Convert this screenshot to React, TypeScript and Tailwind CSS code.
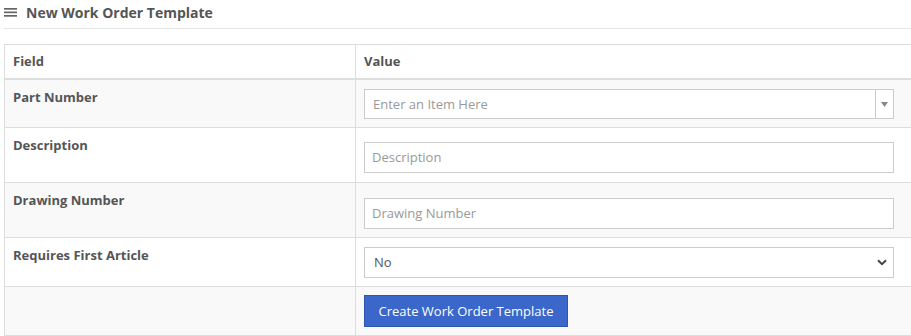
import React from 'react'

const rowCell = 'pl-[8px] pt-[8px] font-bold'

function Row({
  label,
  bg,
  h,
  pt,
  children,
}: {
  label: string
  bg: string
  h: string
  pt: string
  children: React.ReactNode
}) {
  return (
    <div className={`flex border-b border-[#dddddd] ${bg} ${h}`}>
      <div className={`w-[351px] shrink-0 border-r border-[#dddddd] leading-[18px] ${rowCell}`}>{label}</div>
      <div className={`pl-[8px] ${pt}`}>{children}</div>
    </div>
  )
}

export default function App() {
  return (
    <div className="bg-white pl-[4px] text-[13px] text-[#555555] overflow-hidden" style={{ fontFamily: '"Open Sans", "Liberation Sans", sans-serif' }}>
      {/* Header */}
      <div className="h-[29px] border-b border-[#e5e5e5] flex items-start pt-[3px] gap-[9px]">
        <svg width="13" height="10" viewBox="0 0 13 10" className="mt-[5px] shrink-0">
          <rect x="0" y="0" width="13" height="1.7" fill="#666" />
          <rect x="0" y="3.5" width="13" height="1.7" fill="#666" />
          <rect x="0" y="7" width="13" height="1.7" fill="#666" />
        </svg>
        <h1 className="font-bold leading-[20px] text-[14px]">New Work Order Template</h1>
      </div>

      {/* Table */}
      <div className="mt-[15px] w-[908px] border-t border-l border-r border-[#dddddd]">
        <div className="flex h-[35px] border-b-2 border-[#dddddd] bg-white font-bold">
          <div className="w-[351px] shrink-0 border-r border-[#dddddd] pl-[8px] pt-[1px] flex items-center">Field</div>
          <div className="pl-[8px] pt-[1px] flex items-center">Value</div>
        </div>

        <Row label="Part Number" bg="bg-[#f9f9f9]" h="h-[48px]" pt="pt-[9px]">
          <div className="flex w-[530px] h-[30px] border border-[#cccccc] bg-white">
            <div className="flex-1 pl-[8px] pt-[2px] flex items-center text-[#999999]">Enter an Item Here</div>
            <div className="w-[18px] border-l border-[#cccccc] flex items-center justify-center">
              <svg width="7" height="5" viewBox="0 0 7 5">
                <path d="M0 0 H7 L3.5 5 Z" fill="#888" />
              </svg>
            </div>
          </div>
        </Row>

        <Row label="Description" bg="bg-white" h="h-[55px]" pt="pt-[14px]">
          <div className="w-[530px] h-[31px] border border-[#cccccc] bg-white pl-[7px] pt-[1px] flex items-center text-[#999999]">
            Description
          </div>
        </Row>

        <Row label="Drawing Number" bg="bg-[#f9f9f9]" h="h-[55px]" pt="pt-[15px]">
          <div className="w-[530px] h-[31px] border border-[#cccccc] bg-white pl-[7px] pt-[1px] flex items-center text-[#999999]">
            Drawing Number
          </div>
        </Row>

        <Row label="Requires First Article" bg="bg-white" h="h-[49px]" pt="pt-[9px]">
          <div className="w-[530px] h-[31px] border border-[#cccccc] bg-white pl-[9px] pr-[6px] flex items-center justify-between">
            <span className="pt-[1px]">No</span>
            <svg width="10" height="7" viewBox="0 0 10 7">
              <path d="M1 1.2 L5 5.2 L9 1.2" fill="none" stroke="#444" strokeWidth="2" />
            </svg>
          </div>
        </Row>

        <Row label="" bg="bg-[#f9f9f9]" h="h-[49px]" pt="pt-[8px]">
          <button className="h-[32px] w-[204px] bg-[#3a67c9] border border-[#2c56b0] text-white text-[13px] pt-[1px] flex items-center justify-center">
            Create Work Order Template
          </button>
        </Row>
      </div>
    </div>
  )
}
